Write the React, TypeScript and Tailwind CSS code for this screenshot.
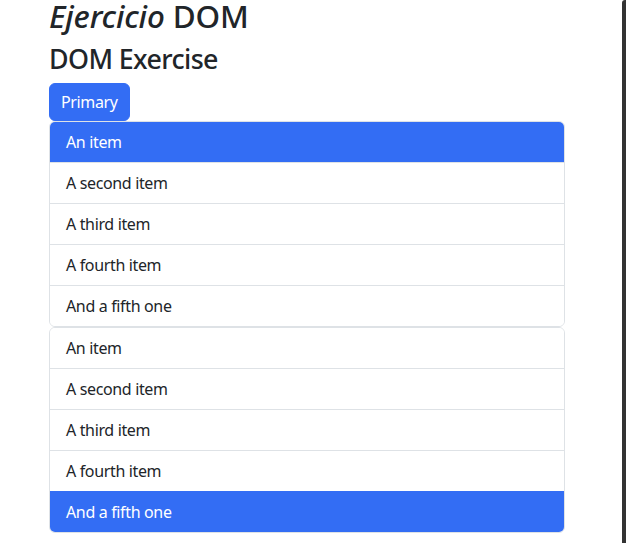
import React from "react";

const items = ["An item", "A second item", "A third item", "A fourth item", "And a fifth one"];

function List({ active }: { active: number }) {
  return (
    <ul className="flex flex-col rounded-[6px] overflow-hidden border border-[#dee2e6]">
      {items.map((t, i) => (
        <li
          key={i}
          className={
            "px-4 py-2 text-[16px] leading-6 tracking-[-0.35px] " +
            (i > 0 ? "border-t " : "") +
            (i === active
              ? "bg-[#336df4] text-white border-[#336df4] -mx-px px-[17px] "
              : "bg-white text-[#212529] border-[#dee2e6] ") +
            (i === active && i === 0 ? "-mt-px pt-[9px] " : "") +
            (i === active && i === items.length - 1 ? "-mb-px pb-[9px] " : "")
          }
        >
          {t}
        </li>
      ))}
    </ul>
  );
}

export default function App() {
  return (
    <div
      className="flex w-[626px] h-[543px] overflow-hidden bg-white"
      style={{ fontFamily: '"Noto Sans", "Open Sans", sans-serif' }}
    >
      <div className="flex-1 flex flex-col pl-[49px] pr-[57px] mt-[-3px]">
        <h1 className="text-[31.4px] leading-[1.2] font-medium text-[#212529] mb-2 tracking-[-0.15px]">
          <em>Ejercicio</em> DOM
        </h1>
        <h2 className="text-[26.8px] leading-[1.2] font-medium text-[#212529] mb-2 tracking-[-0.6px]">DOM Exercise</h2>
        <div>
          <button className="bg-[#336df4] text-white text-[16px] leading-6 tracking-[-0.35px] px-[11px] py-[6px] rounded-[6px] border border-[#336df4]">
            Primary
          </button>
        </div>
        <List active={0} />
        <List active={4} />
      </div>
      <div className="w-[4px] bg-[#333333] rounded-tl-[3px]" />
    </div>
  );
}
